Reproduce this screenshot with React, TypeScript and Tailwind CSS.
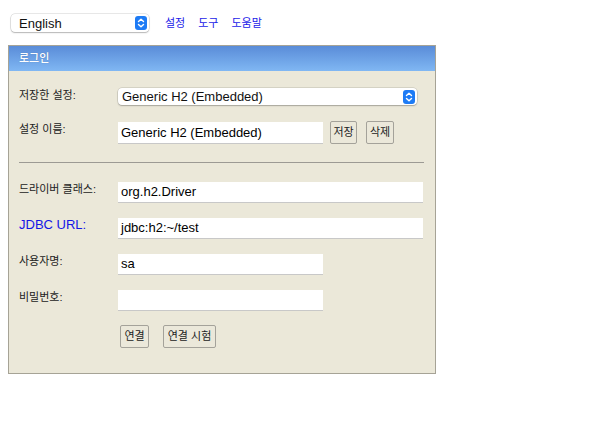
import React from 'react';

const font = "font-['Liberation_Sans','Noto_Sans_CJK_KR',sans-serif]";

function Stepper({ className }: { className: string }) {
  return (
    <span className={`flex items-center justify-center rounded-[3px] bg-[#1d7bf5] ${className}`}>
      <svg width="8" height="10" viewBox="0 0 8 10" fill="none" stroke="white" strokeWidth="1.4" strokeLinecap="round" strokeLinejoin="round">
        <path d="M1.5 3.6 L4 1.3 L6.5 3.6" />
        <path d="M1.5 6.4 L4 8.7 L6.5 6.4" />
      </svg>
    </span>
  );
}

function MacSelect({ value, className }: { value: string; className: string }) {
  return (
    <div className={`flex items-center justify-between rounded-[4px] bg-white pl-2 pr-[2px] shadow-[0_0_0_0.5px_rgba(0,0,0,0.18),0_1px_1.5px_rgba(0,0,0,0.22)] ${className}`}>
      <span className="text-[13px] leading-none text-[#111]">{value}</span>
      <Stepper className="w-[12px] h-[14px]" />
    </div>
  );
}

function Field({ value, wide }: { value?: string; wide?: boolean }) {
  return (
    <div className={`mt-[1px] h-[21px] ${wide ? 'w-[305px]' : 'w-[205px]'} bg-white border-b border-[#c8c8c8] px-[3px] flex items-center text-[13px] text-black`}>
      {value}
    </div>
  );
}

function Btn({ children, className = '' }: { children: React.ReactNode; className?: string }) {
  return (
    <button className={`h-[23px] flex items-center justify-center whitespace-nowrap rounded-[2px] border border-[#a4a29a] bg-[#ebe8da] text-[11px] text-[#222] leading-none ${className}`}>
      {children}
    </button>
  );
}

function Row({ label, children, className = '', blue }: { label: string; children: React.ReactNode; className?: string; blue?: boolean }) {
  return (
    <div className={`flex items-start ${className}`}>
      <div className={`w-[99px] h-4 flex items-center whitespace-nowrap ${blue ? 'text-[13px] text-[#1515e6]' : 'text-[11px] text-[#222]'}`}>{label}</div>
      {children}
    </div>
  );
}

export default function App() {
  return (
    <div className={`${font} w-[611px] h-[444px] bg-white relative`}>
      {/* top bar */}
      <div className="flex items-center h-[18px] mt-[14px] pl-[11px]">
        <MacSelect value="English" className="w-[138px] h-[18px]" />
        <div className="flex gap-[13px] ml-[16px] text-[11px] text-[#1a1ae8]">
          <span>설정</span>
          <span>도구</span>
          <span>도움말</span>
        </div>
      </div>

      {/* login panel */}
      <div className="mt-[13px] ml-[8px] w-[428px] h-[329px] border border-[#a6a396] bg-[#ebe8d9]">
        <div className="h-[25px] bg-gradient-to-b from-[#5a8cd8] to-[#80b7f3] pl-[10px] flex items-center text-[11px] font-medium text-white [text-shadow:0_0_1px_rgba(0,0,0,0.25)]">
          로그인
        </div>

        <div className="pl-[10px]">
          <Row label="저장한 설정:" className="mt-[16px]">
            <MacSelect value="Generic H2 (Embedded)" className="mt-[1px] w-[299px] h-[17px] pl-[4px]" />
          </Row>

          <Row label="설정 이름:" className="mt-[16px]">
            <div className="flex items-start">
              <div className="mt-[1px] h-[22px] w-[205px] bg-white border-b border-[#c8c8c8] px-[3px] flex items-center text-[13px] text-black">
                Generic H2 (Embedded)
              </div>
              <Btn className="ml-[7px] w-[27px]">저장</Btn>
              <Btn className="ml-[9px] w-[28px]">삭제</Btn>
            </div>
          </Row>

          <div className="mt-[18px] mr-[11px] h-px bg-[#9c9a94]" />

          <Row label="드라이버 클래스:" className="mt-[18px]">
            <Field value="org.h2.Driver" wide />
          </Row>
          <Row label="JDBC URL:" className="mt-[14px]" blue>
            <Field value="jdbc:h2:~/test" wide />
          </Row>
          <Row label="사용자명:" className="mt-[14px]">
            <Field value="sa" />
          </Row>
          <Row label="비밀번호:" className="mt-[14px]">
            <Field />
          </Row>

          <div className="flex mt-[14px] ml-[101px]">
            <Btn className="w-[29px]">연결</Btn>
            <Btn className="ml-[14px] w-[53px]">연결 시험</Btn>
          </div>
        </div>
      </div>
    </div>
  );
}
